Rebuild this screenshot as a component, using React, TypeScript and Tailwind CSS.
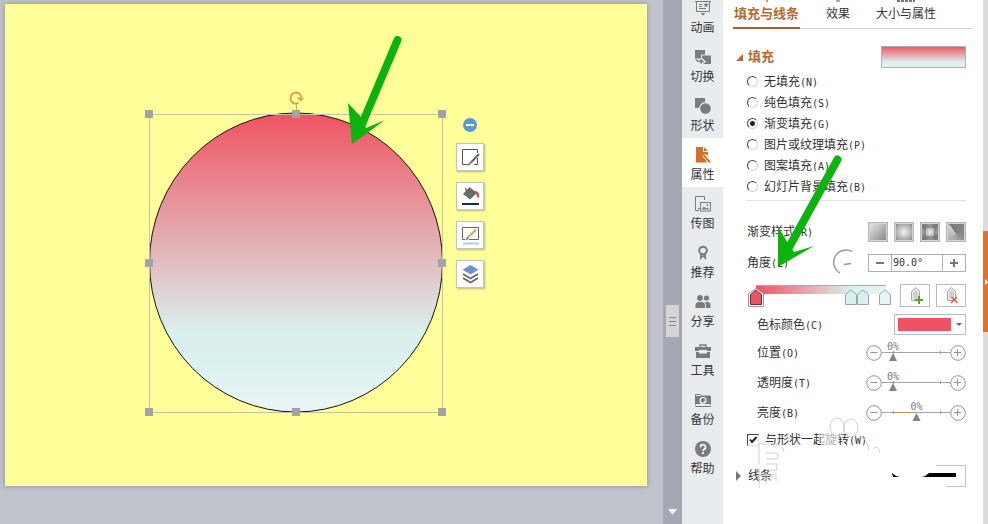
import { useState } from 'react';
import type { ReactNode } from 'react';

const navItems: { name: string; icon: ReactNode }[] = [
  {
    name: '动画',
    icon: (
      <g fill="none" stroke="currentColor">
        <path d="M0 1.500h16M1.500 1v10.500h13V1M4 4.500h3M4 6.500h3M4 8.500h7" />
        <path d="M11 2.500l.8 1.600 1.700.2-1.300 1.200.4 1.700-1.600-.9-1.600.9.4-1.700-1.300-1.200 1.700-.2zM5.500 13h5L8 15.500z" fill="currentColor" stroke="none" />
      </g>
    )
  },
  {
    name: '切换',
    icon: (
      <g fill="currentColor">
        <path d="M0 1h10v4.500H6v4H0z" />
        <path d="M7 6.500h9V15H8.500l2.500-2.500L7 9z" />
        <path d="M1 10.500c1 2 3 2 5 2" fill="none" stroke="currentColor" strokeWidth="1.300" />
        <path d="M5.500 9.800l3.500 2.700-3.500 2.500z" />
      </g>
    )
  },
  {
    name: '形状',
    icon: (
      <g fill="currentColor">
        <path d="M0 0h10v4A6.500 6.500 0 0 0 4 10H0z" />
        <circle cx="10.500" cy="10.500" r="5.300" />
      </g>
    )
  },
  {
    name: '属性',
    icon: (
      <g fill="currentColor">
        <path d="M1 0h7v5h5v3.500L10 7 7.500 9.500 10 12l2 3.500H1z" />
        <path d="M9 0l4 4H9z" />
        <path d="M9 8.500l2.200 2.200M11 11l4 4.200" fill="none" stroke="currentColor" strokeWidth="2" />
      </g>
    )
  },
  {
    name: '传图',
    icon: (
      <g fill="none" stroke="currentColor">
        <path d="M4 14.500H.500V.500h9V4" />
        <path d="M3 12.500h2" />
        <rect x="5.500" y="6.500" width="10" height="8.500" />
        <path d="M6.500 13.500l2.500-3 2 2 1.500-1 2 2z" fill="currentColor" stroke="none" />
        <circle cx="12.500" cy="9" r=".9" fill="currentColor" stroke="none" />
      </g>
    )
  },
  {
    name: '推荐',
    icon: (
      <g>
        <circle cx="8" cy="5.500" r="3.800" fill="none" stroke="currentColor" strokeWidth="2" />
        <path d="M5 9.500h2L8 11l1-1.500h2V15l-1.500-1.500L8 11.500 6.500 13.500 5 15z" fill="currentColor" />
      </g>
    )
  },
  {
    name: '分享',
    icon: (
      <g fill="currentColor">
        <circle cx="5" cy="4" r="2.900" />
        <circle cx="11.500" cy="4" r="2.600" />
        <path d="M.500 14v-2.500A3.500 3.500 0 0 1 4 8h2.500A3.500 3.500 0 0 1 10 11.500V14zM10.500 8h2A3 3 0 0 1 15.500 11v3H11v-3c0-1.500-.5-2.200-1.500-2.800z" />
      </g>
    )
  },
  {
    name: '工具',
    icon: (
      <g fill="currentColor">
        <path d="M5 4V2h6v2" fill="none" stroke="currentColor" strokeWidth="1.400" />
        <path d="M0 4h16v4h-4V7H4v1H0z" />
        <path d="M1 9h3v1.500h8V9h3v6H1z" />
      </g>
    )
  },
  {
    name: '备份',
    icon: (
      <g>
        <path d="M.500 13V2.500h5l1.500 1.500h8.500v9" fill="none" stroke="currentColor" />
        <path d="M1 4h14v8H1zM0 14h16v1H0z" fill="currentColor" />
        <path d="M5.800 10.500A3 3 0 1 1 10 10.800" fill="none" stroke="#fff" strokeWidth="1.200" />
        <path d="M4.500 10h3v3zM10 8.500v3H7.500z" fill="#fff" />
      </g>
    )
  },
  {
    name: '帮助',
    icon: (
      <g>
        <circle cx="8" cy="8" r="8" fill="currentColor" />
        <path d="M5.500 6.200A2.500 2.500 0 1 1 8.800 8.500Q8 8.900 8 10" fill="none" stroke="#fff" strokeWidth="1.700" />
        <circle cx="8" cy="12.200" r="1.100" fill="#fff" />
      </g>
    )
  }
];

const fillTypes = [
  { name: '无填充', hotkey: 'N' },
  { name: '纯色填充', hotkey: 'S' },
  { name: '渐变填充', hotkey: 'G' },
  { name: '图片或纹理填充', hotkey: 'P' },
  { name: '图案填充', hotkey: 'A' },
  { name: '幻灯片背景填充', hotkey: 'B' }
];

const gradientStyles = [
  { name: '线性渐变', className: 'bg-[linear-gradient(135deg,#e8e8e8,#848484)]' },
  { name: '射线渐变', className: 'bg-[radial-gradient(circle,#f2f2f2,#808080)]' },
  { name: '矩形渐变', className: 'bg-[conic-gradient(#999,#777_12%,#999_25%,#777_37%,#999_50%,#777_62%,#999_75%,#777_87%,#999)]', core: true },
  { name: '路径渐变', className: 'bg-[conic-gradient(from_325deg_at_50%_60%,#7a7a7a,#8c8c8c_40%,#b8b8b8_80%,#cfcfcf)]' }
];

const gradientStops = [
  { at: 0, fill: '#ef5361', active: true },
  { at: 73, fill: '#daf0ee' },
  { at: 82, fill: '#daf0ee' },
  { at: 99, fill: '#e6f4f4' }
];

const shapeTools = [
  {
    name: '形状样式',
    icon: (
      <g fill="none">
        <path d="M8 17.500H2.500v-15h15V6M17.500 11v6.500H14" stroke="#555" />
        <path d="M19 7l-8 8.500" stroke="#666" strokeWidth="2" />
        <path d="M6 18.500c2 0 2-3.500 4.500-3.500 2 1.500.5 4-4.500 3.500z" fill="#6c9bd2" />
      </g>
    )
  },
  {
    name: '形状填充',
    icon: (
      <g>
        <path d="M9.500 1l7.500 6-7 6.500-7-5.500z" fill="#6b6b6b" />
        <path d="M5 2.500l4 4" stroke="#6b6b6b" strokeWidth="1.500" />
        <path d="M15 5c3.500 0 5 3 4 7-2.500 0-1.500-3-4-5z" fill="#c4605a" />
        <path d="M2 18h17" stroke="#1f2a5c" strokeWidth="2" />
      </g>
    )
  },
  {
    name: '形状轮廓',
    icon: (
      <g fill="none">
        <path d="M5 14.500H2.500v-12h16v12H9" stroke="#666" />
        <path d="M16 4.500l-9 9" stroke="#d9a066" strokeWidth="2.200" />
        <path d="M7.500 12L5 15.500l3.500-1.500z" fill="#666" />
        <path d="M3 18.500h16" stroke="#a9d3dc" strokeWidth="2" />
      </g>
    )
  },
  {
    name: '叠放次序',
    icon: (
      <g fill="none">
        <path d="M10.500 1l8 4.800-8 4.800-8-4.800z" fill="#6c93d1" />
        <path d="M3 10l7.500 4.500L18 10M3 14l7.500 4.500L18 14" stroke="#666" strokeWidth="1.800" />
      </g>
    )
  }
];

const handles = [
  [144, 110], [291, 110], [437, 110],
  [144, 259], [437, 259],
  [144, 408], [291, 408], [437, 408]
];

function Hotkey({ letter }: { letter: string }) {
  return <span className="font-['DejaVu_Sans_Mono',monospace] text-[10px]">({letter})</span>;
}

function Slide() {
  return (
    <section className="relative min-w-0 flex-1 bg-[#ffff99] shadow-[0_0_5px_#8b8b90]">
      <svg className="absolute left-0 top-0 h-[482px] w-[642px]" viewBox="0 0 642 482">
        <defs>
          <linearGradient id="shape-fill" x1="0" y1="0" x2="0" y2="1">
            <stop offset="0" stopColor="#ef5361" />
            <stop offset=".73" stopColor="#dbefed" />
            <stop offset=".82" stopColor="#dbf1ef" />
            <stop offset="1" stopColor="#ebf4f8" />
          </linearGradient>
        </defs>
        <ellipse cx="291" cy="258.500" rx="146.500" ry="149.500" fill="url(#shape-fill)" stroke="#111" />
        <rect x="144.500" y="110.500" width="293" height="298" fill="none" stroke="#c2c2a0" />
        <path d="M291.500 101v6" stroke="#e0a030" />
        {handles.map(([x, y]) => (
          <rect key={`${x}-${y}`} x={x - 4} y={y - 4} width="8" height="8" fill="#a3a3a6" />
        ))}
        <path d="M293.500 99A5.500 5.500 0 1 1 296.300 93" fill="none" stroke="#e0a23c" strokeWidth="2" />
        <path d="M291.500 93.500h7.500l-3 4z" fill="#e0a23c" />
        <path d="M392.500 36L355 125" stroke="#0db30d" strokeWidth="8" strokeLinecap="round" />
        <path d="M347 140l-4-41 13 14 5 11 19-8z" fill="#0db30d" />
      </svg>

      <div className="absolute left-[451px] top-[114px] flex flex-col items-center gap-[11px]">
        <button type="button" aria-label="收起" className="flex size-[14px] items-center justify-center rounded-full bg-[#5b9bd5]">
          <span className="h-[2px] w-2 bg-white" />
        </button>
        {shapeTools.map((tool) => (
          <button
            key={tool.name}
            type="button"
            aria-label={tool.name}
            className="flex size-7 items-center justify-center border border-[#c5c5b8] bg-white shadow-[1px_1px_2px_#b5b58a]"
          >
            <svg className="size-[21px]" viewBox="0 0 21 21">{tool.icon}</svg>
          </button>
        ))}
      </div>
    </section>
  );
}

function ScrollTrack() {
  return (
    <div className="relative w-[19px] shrink-0 bg-[#a5a8b2]">
      <div className="absolute left-[3px] top-[305px] flex h-8 w-[13px] flex-col items-center justify-center gap-[3px] bg-[#d4d5d8]">
        <span className="h-px w-[7px] bg-[#85878d]" />
        <span className="h-px w-[7px] bg-[#85878d]" />
        <span className="h-px w-[7px] bg-[#85878d]" />
      </div>
      <svg className="absolute bottom-[9px] left-[5px] h-[6px] w-[9px]" viewBox="0 0 9 6">
        <path d="M0 0h9L4.500 5.500z" fill="#fff" />
      </svg>
    </div>
  );
}

function AmountSlider({ name, hotkey, initial }: { name: string; hotkey: string; initial: number }) {
  const [value, setValue] = useState(initial);
  const id = `amount-${hotkey}`;

  return (
    <div className="flex h-[30px] items-center pl-[10px]">
      <label htmlFor={id} className="flex-1">{name}<Hotkey letter={hotkey} /></label>
      <RoundButton label={`减少${name}`} />
      <div className="relative flex h-4 w-[68px] items-center">
        <div className="absolute inset-x-0 top-[7px] h-px bg-[#a5a5a5]" />
        <div className="absolute left-[11px] top-[6px] h-[3px] w-[48px] border-x border-[#999]" />
        {initial > 0 && <div className="absolute left-[11px] top-[7px] h-px w-6 bg-[#d8954a]" />}
        <output
          htmlFor={id}
          className="absolute bottom-2 -translate-x-1/2 font-['DejaVu_Sans_Mono',monospace] text-[10px] leading-3 text-[#777]"
          style={{ left: 11 + value * 0.47 }}
        >
          0%
        </output>
        <input
          id={id}
          type="range"
          value={value}
          onChange={(e) => setValue(Number(e.target.value))}
          className="relative mx-[7px] mt-2 h-2 w-[55px] appearance-none bg-transparent [&::-webkit-slider-thumb]:h-2 [&::-webkit-slider-thumb]:w-2 [&::-webkit-slider-thumb]:appearance-none [&::-webkit-slider-thumb]:bg-[#858585] [&::-webkit-slider-thumb]:[clip-path:polygon(50%_0,100%_100%,0_100%)]"
        />
      </div>
      <RoundButton label={`增加${name}`} plus />
    </div>
  );
}

function RoundButton({ label, plus }: { label: string; plus?: boolean }) {
  return (
    <button type="button" aria-label={label} className="size-4">
      <svg className="size-4" viewBox="0 0 16 16" fill="none" stroke="#929292">
        <circle cx="8" cy="8" r="7.300" />
        <path d={plus ? 'M4 7.500h7M7.500 4v7' : 'M4.500 7.500h7'} />
      </svg>
    </button>
  );
}

function StopIcon() {
  return (
    <g stroke="#a9aba9">
      <path d="M4.500 14.500v-9L8.500 1.500l4 4v9z" fill="#e6e8e6" />
      <path d="M6.500 12.500v-6l2-2 2 2v6z" fill="#c9ccc9" stroke="none" />
    </g>
  );
}

export default function App() {
  const [fillType, setFillType] = useState('G');
  const [rotate, setRotate] = useState(true);

  return (
    <div className="flex h-screen min-h-[524px] overflow-hidden bg-[#c0c3cc] font-['Liberation_Sans','Noto_Sans_CJK_SC',sans-serif] text-xs text-[#333]">
      <main className="flex min-w-0 flex-1 pb-[38px] pl-[5px] pr-4 pt-1">
        <Slide />
      </main>

      <ScrollTrack />

      <nav className="w-[41px] shrink-0 bg-[#e9ecef]">
        {navItems.map((item, i) => (
          <button
            key={item.name}
            type="button"
            className={`flex w-full flex-col items-center justify-end gap-[3px] pb-[3px] ${i === 0 ? 'h-10' : 'h-[49px]'} ${item.name === '属性' ? 'bg-white' : ''}`}
          >
            <svg className={`size-4 ${item.name === '属性' ? 'text-[#d2722a]' : 'text-[#7b7b7b]'}`} viewBox="0 0 16 16">
              {item.icon}
            </svg>
            <span className="leading-[18px]">{item.name}</span>
          </button>
        ))}
      </nav>

      <aside className="relative w-[260px] shrink-0 bg-white">
        <div className="mx-[10px] flex h-[29px] items-stretch gap-[26px] border-b border-[#d4d7da]">
          <button type="button" className="-mb-px flex w-[67px] flex-col items-center border-b-2 border-[#a8602c] text-[13px] font-bold text-[#b5692f]">
            <span className="h-[2px] w-[2px] bg-[#d99a6c]" />
            <span className="leading-6">填充与线条</span>
          </button>
          <button type="button" className="flex flex-col items-center">
            <span className="h-[2px] w-1 bg-[#aaa]" />
            <span className="leading-6">效果</span>
          </button>
          <button type="button" className="flex flex-col items-center">
            <svg className="h-[2px] w-[18px]" viewBox="0 0 18 2">
              <path d="M0 1h18" stroke="#777" strokeWidth="2" strokeDasharray="3 1" />
            </svg>
            <span className="leading-6">大小与属性</span>
          </button>
        </div>

        <div className="pl-6 pr-[17px]">
          <div className="-ml-[11px] mt-[17px] flex h-[22px] items-center">
            <svg className="size-[7px]" viewBox="0 0 7 7"><path d="M7 0v7H0z" fill="#b5692f" /></svg>
            <h2 className="ml-[5px] flex-1 text-[13px] font-bold text-[#b5692f]">填充</h2>
            <button type="button" aria-label="填充预设" className="h-[22px] w-[85px] border border-[#a9b3b3] bg-[linear-gradient(#ea5a68,#e0eeee_75%,#e6f2f4)]" />
          </div>

          <fieldset className="mt-[3px]">
            {fillTypes.map((type) => (
              <label key={type.hotkey} className="flex h-[21px] items-center">
                <input
                  type="radio"
                  name="fill-type"
                  checked={fillType === type.hotkey}
                  onChange={() => setFillType(type.hotkey)}
                  className="mr-[6px] size-[11px] appearance-none rounded-full border border-[#d5d5d5] border-l-[#444] border-t-[#444] checked:bg-[radial-gradient(circle,#222_2px,transparent_3px)]"
                />
                <span>{type.name}<Hotkey letter={type.hotkey} /></span>
              </label>
            ))}
          </fieldset>

          <hr className="mt-[3px] border-[#e2e2e2]" />

          <div className="mt-[21px] flex h-5 items-center gap-[6px]">
            <span className="flex-1">渐变样式<Hotkey letter="R" /></span>
            {gradientStyles.map((style) => (
              <button
                key={style.name}
                type="button"
                aria-label={style.name}
                className={`flex size-5 items-center justify-center border border-[#b5b5b5] shadow-[inset_0_0_0_1px_#d5d5d5] ${style.className}`}
              >
                {style.core && <span className="size-2 bg-[radial-gradient(circle,#eee,#aaa)]" />}
              </button>
            ))}
          </div>

          <div className="mt-3 flex h-[18px] items-center">
            <label htmlFor="angle" className="flex-1">角度<Hotkey letter="E" /></label>
            <svg className="mr-2 h-7 w-[27px]" viewBox="0 0 27 28" fill="none" stroke="#999" strokeWidth="1.500">
              <path d="M19 2.500A12.300 12.300 0 0 0 7 24M11 15.500l7-1" />
            </svg>
            <div className="flex h-[18px] w-[98px] border border-[#aeb1b4]">
              <button type="button" aria-label="减小角度" className="flex w-[22px] items-center justify-center">
                <span className="h-[2px] w-2 bg-[#777]" />
              </button>
              <input
                id="angle"
                type="text"
                defaultValue="90.0°"
                className="w-[52px] border-x border-[#aeb1b4] pl-px font-['DejaVu_Sans_Mono',monospace] text-[10px] leading-4 outline-none"
              />
              <button type="button" aria-label="增大角度" className="flex flex-1 items-center justify-center">
                <svg className="size-2" viewBox="0 0 8 8"><path d="M0 4h8M4 0v8" stroke="#777" strokeWidth="2" /></svg>
              </button>
            </div>
          </div>

          <div className="mt-3 flex h-[23px] gap-[6px]">
            <div className="flex-1 pl-[9px] pr-2">
              <div className="relative mt-px h-[9px] border-t border-[#aaa] bg-[linear-gradient(90deg,#ef5361,#dbefed_73%,#e6f4f4)]">
                {gradientStops.map((stop) => (
                  <button
                    key={stop.at}
                    type="button"
                    aria-label={`色标 ${stop.at}%`}
                    className="absolute top-[2px] -translate-x-1/2"
                    style={{ left: `${stop.at}%` }}
                  >
                    <svg className="h-[19px] w-4" viewBox="0 0 16 19">
                      {stop.active && <path d="M.500 18.500v-13L8 .500l7.500 5v13z" fill="#fff" stroke="#c4888c" />}
                      <path d="M2.500 16.500V6.500L8 2l5.500 4.500v10z" fill={stop.fill} stroke={stop.active ? '#553a3d' : '#93a9a9'} />
                    </svg>
                  </button>
                ))}
              </div>
            </div>
            <button type="button" aria-label="增加渐变光圈" className="flex w-[30px] items-center justify-center border border-[#bbb]">
              <svg className="h-[19px] w-[17px]" viewBox="0 0 17 19">
                <StopIcon />
                <path d="M8 14h8M12 10v8" stroke="#5ea02c" strokeWidth="2" />
              </svg>
            </button>
            <button type="button" aria-label="删除渐变光圈" className="flex w-[30px] items-center justify-center border border-[#bbb]">
              <svg className="h-[19px] w-[17px]" viewBox="0 0 17 19">
                <StopIcon />
                <path d="M8.500 11l6 6M14 11l-6 6" stroke="#e2583f" strokeWidth="1.300" />
              </svg>
            </button>
          </div>

          <div className="mt-[7px] flex h-[21px] items-center pl-[10px]">
            <span className="flex-1">色标颜色<Hotkey letter="C" /></span>
            <button type="button" aria-label="色标颜色" className="flex h-[21px] w-[72px] items-center gap-[5px] border border-[#b9bcbf] pl-[3px]">
              <span className="h-[13px] w-[53px] bg-[#ef5361]" />
              <svg className="h-[3px] w-[6px]" viewBox="0 0 6 3"><path d="M0 0h6L3 3z" fill="#666" /></svg>
            </button>
          </div>

          <div className="mt-[3px]">
            <AmountSlider name="位置" hotkey="O" initial={0} />
            <AmountSlider name="透明度" hotkey="T" initial={0} />
            <AmountSlider name="亮度" hotkey="B" initial={50} />
          </div>

          <label className="mt-[2px] flex h-5 items-center">
            <span className="relative mr-[6px] size-3">
              <input
                type="checkbox"
                checked={rotate}
                onChange={(e) => setRotate(e.target.checked)}
                className="block size-3 appearance-none border border-[#ddd] border-l-[#444] border-t-[#444]"
              />
              {rotate && (
                <svg className="pointer-events-none absolute inset-0 size-3" viewBox="0 0 12 12">
                  <path d="M3 5.500L5 8l4.500-5" fill="none" stroke="#222" strokeWidth="2" />
                </svg>
              )}
            </span>
            <span>与形状一起旋转<Hotkey letter="W" /></span>
          </label>

          <div className="-ml-[11px] mt-[15px] flex h-[22px] items-center">
            <svg className="h-[10px] w-[5px]" viewBox="0 0 5 10"><path d="M0 0l5 5-5 5z" fill="#777" /></svg>
            <h2 className="ml-[7px] flex-1">线条</h2>
            <button type="button" aria-label="线条样式" className="h-[22px] w-[85px]">
              <svg className="h-[22px] w-[85px]" viewBox="0 0 85 22">
                <path d="M55 .500h29.500v21H65" fill="none" stroke="#c4c4c4" />
                <path d="M11 8q3 3 8 4h-7zM48 8h27v4H41q4-1 7-4z" fill="#000" />
              </svg>
            </button>
          </div>
        </div>

        {/* paw watermark */}
        <svg className="pointer-events-none absolute left-[30px] top-[412px] h-20 w-[140px]" viewBox="0 0 140 80" fill="none" stroke="#cfcfcf">
          <path d="M68 23q10-6 18 0v14H68z" fill="#fff" fillOpacity=".6" stroke="none" />
          <ellipse cx="84" cy="15" rx="7" ry="9" fill="#fff" fillOpacity=".6" />
          <ellipse cx="98" cy="16" rx="7" ry="9" fill="#fff" fillOpacity=".6" />
          <path d="M66 30q0-9 5-8 5 1 6 8M107 25q8 2 9 14M120 37q4-5 7 3" />
          <path d="M6 52V32h16q8 1 9 8M13 41h10q2 0 2 3t-2 3H13M13 52h11v6H13M13 63h10v6M13 60v12M6 56v20" />
        </svg>

        <svg className="pointer-events-none absolute left-[50px] top-[150px] h-[120px] w-[76px]" viewBox="0 0 76 120">
          <path d="M64.500 9.500L14 101" stroke="#0db30d" strokeWidth="8" strokeLinecap="round" />
          <path d="M5 117V77l8 13 8 12 20-6z" fill="#0db30d" />
        </svg>
      </aside>

      <div className="w-[5px] shrink-0 bg-[#dcdcdc] pt-[231px]">
        <button type="button" aria-label="收起窗格" className="flex h-[101px] w-[5px] items-center justify-end bg-[#e0722d]">
          <svg className="h-[6px] w-[3px]" viewBox="0 0 3 6"><path d="M0 0l3 3-3 3z" fill="#fff" /></svg>
        </button>
      </div>
    </div>
  );
}
